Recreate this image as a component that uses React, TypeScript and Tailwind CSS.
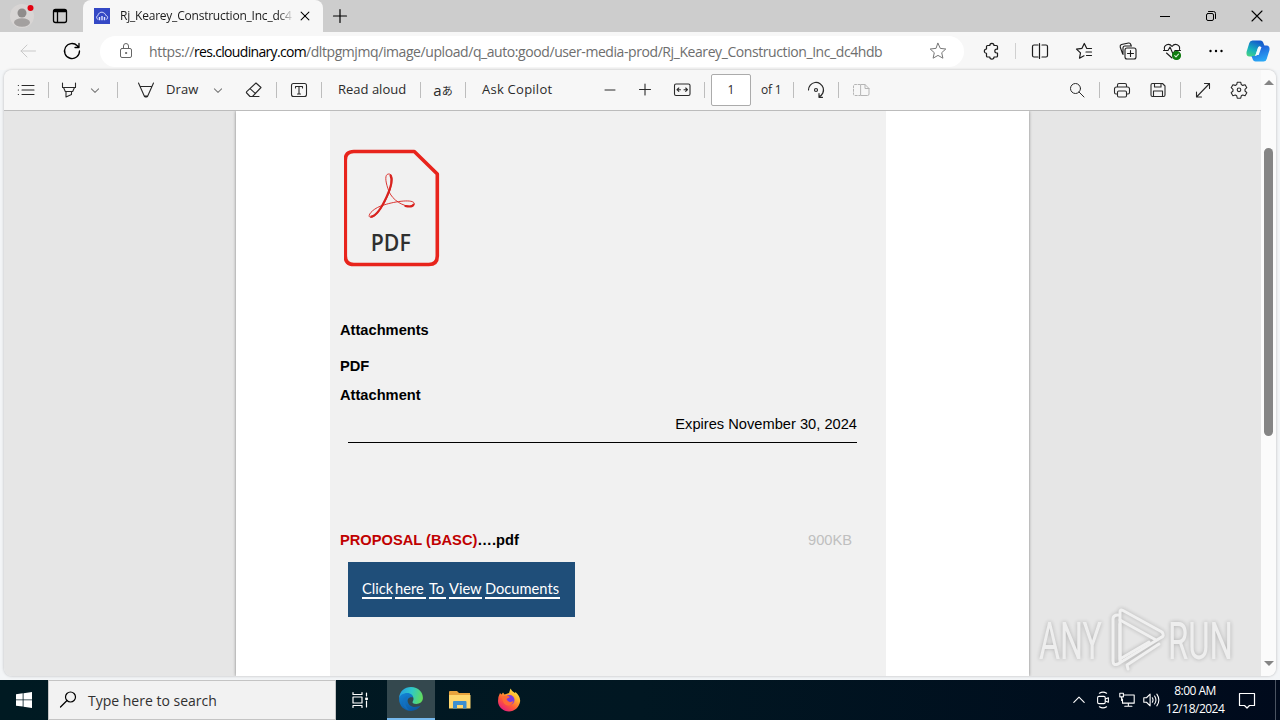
import React from 'react';
import clsx from 'clsx';

interface IconProps {
  children: React.ReactNode;
  className?: string;
  size?: string;
  strokeWidth?: number;
}

const Icon = ({ children, className, size = 'size-5', strokeWidth = 1 }: IconProps) => (
  <svg
    viewBox="0 0 20 20"
    fill="none"
    stroke="currentColor"
    strokeWidth={strokeWidth}
    strokeLinecap="round"
    strokeLinejoin="round"
    className={clsx('shrink-0', size, className)}
  >
    {children}
  </svg>
);

const Cell = ({ children, className }: { children: React.ReactNode; className?: string }) => (
  <div className={clsx('flex h-full shrink-0 items-center justify-center', className)}>{children}</div>
);

const Divider = ({ className }: { className?: string }) => (
  <div className={clsx('h-4 w-px shrink-0 bg-[#bdbdbd]', className)} />
);

const ChevronDown = () => (
  <Icon size="size-3" className="text-[#777]" strokeWidth={1.7}>
    <path d="M4 8l6 6 6-6" />
  </Icon>
);

const TabStrip = () => (
  <div className="flex h-8 bg-[#cdcdcd]">
    <Cell className="w-[38px] pl-[6px]">
      <svg viewBox="0 0 28 28" className="size-7">
        <circle cx="14" cy="14" r="12" fill="#d8d5d4" />
        <circle cx="14" cy="11" r="4.5" fill="#8f8c8b" />
        <ellipse cx="14" cy="20.5" rx="8" ry="4.2" fill="#a3a09f" />
        <circle cx="22.5" cy="6" r="3" fill="#e3000f" />
      </svg>
    </Cell>
    <Cell className="w-[45px] pr-[2px]">
      <Icon strokeWidth={1.3} className="text-black">
        <rect x="3.5" y="3.5" width="13" height="13" rx="2" />
        <path d="M4.5 5h11" strokeWidth="2.6" />
        <path d="M7.5 6v10" />
      </Icon>
    </Cell>
    <div className="flex w-60 items-center rounded-t-lg bg-[#f7f7f7] pl-[11px]">
      <svg viewBox="0 0 16 16" className="size-4 shrink-0">
        <rect width="16" height="16" fill="#3448c5" />
        <path
          d="M4.2 11.4C2.4 11 1.9 8.3 4 7.5 4.4 4.6 7.5 3.4 9.7 4.8 11 5.4 11.5 6.5 11.7 7.3 14 7.8 14.2 10.5 12.3 11.4"
          fill="none"
          stroke="#dfe4ff"
          strokeWidth="1"
        />
        <path d="M5.5 9v3.300M8 8v4.300M10.500 9v3.300" stroke="#dfe4ff" strokeWidth="1.4" />
      </svg>
      <span className="ml-[10px] w-[172px] shrink-0 overflow-hidden text-[12px] tracking-[-0.22px] whitespace-nowrap text-[#1b1b1b] [mask-image:linear-gradient(to_right,black_158px,transparent_174px)]">
        Rj_Kearey_Construction_Inc_dc4hdb
      </span>
      <Icon size="size-3" className="ml-[7px] text-black" strokeWidth={1.7}>
        <path d="M3.500 3.500l13 13M16.500 3.500l-13 13" />
      </Icon>
    </div>
    <Cell className="w-[34px]">
      <Icon className="text-black" strokeWidth={1.2}>
        <path d="M10 3.500v13M3.500 10h13" />
      </Icon>
    </Cell>
    <div className="ml-auto flex text-black">
      <Cell className="w-[46px]">
        <Icon>
          <path d="M5 10.500h10" strokeLinecap="butt" />
        </Icon>
      </Cell>
      <Cell className="w-[46px]">
        <Icon>
          <rect x="5.500" y="7.500" width="7" height="7" rx="1.500" />
          <path d="M7.500 5.500h5a2 2 0 0 1 2 2v5" />
        </Icon>
      </Cell>
      <Cell className="w-[46px]">
        <Icon strokeWidth={1.1}>
          <path d="M5 5l10 10M15 5L5 15" />
        </Icon>
      </Cell>
    </div>
  </div>
);

const CopilotLogo = () => (
  <svg viewBox="0 0 24 24" className="size-6">
    <defs>
      <linearGradient id="copilotLeft" x1="0" y1="1" x2="0.5" y2="0">
        <stop offset="0" stopColor="#4fd879" />
        <stop offset="0.45" stopColor="#18b3bd" />
        <stop offset="1" stopColor="#155dcc" />
      </linearGradient>
      <linearGradient id="copilotRight" x1="0.2" y1="0" x2="0.5" y2="1">
        <stop offset="0" stopColor="#1e57d6" />
        <stop offset="1" stopColor="#2aa8f5" />
      </linearGradient>
    </defs>
    <path d="M6.500 1.500h8q2 0 2.700 2L18.500 7h-4q-2 0-2.700 2l-2 6.500Q9 17.500 7 17.500H3.500Q0 17.500.500 13L3.300 4Q4 1.500 6.500 1.500z" fill="url(#copilotLeft)" />
    <path d="M17.500 22.500h-8q-2 0-2.700-2L5.500 17H9q2 0 2.700-2l2-6.500Q14.300 6.500 16.500 6.500h4q3.500 0 3 4.500l-2.800 9Q20 22.500 17.500 22.500z" fill="url(#copilotRight)" />
    <path d="M12.500 8h3l-2.800 8h-3.200z" fill="#f4fbff" />
  </svg>
);

const AddressBar = () => (
  <div className="flex h-[38px] items-center bg-[#f7f7f7] text-[#1b1b1b]">
    <Cell className="ml-[6px] w-11 text-[#c9c9c9]">
      <Icon>
        <path d="M17.500 10H3M9 4l-6 6 6 6" />
      </Icon>
    </Cell>
    <Cell className="w-11">
      <Icon strokeWidth={1.3} className="text-black">
        <path d="M17.500 10A7.500 7.500 0 1 1 15.300 4.700L17 6.500M17 2.500v4h-4" />
      </Icon>
    </Cell>
    <div className="ml-[6px] flex h-[31px] w-[864px] items-center rounded-full bg-white">
      <Cell className="w-[49px] pl-[3px] text-[#666]">
        <Icon>
          <rect x="4.500" y="7.500" width="11" height="9" rx="1.500" />
          <path d="M7.500 7.500V5a2.500 2.500 0 0 1 5 0v2.500" />
          <circle cx="10" cy="12" r=".6" fill="currentColor" />
        </Icon>
      </Cell>
      <div className="text-[14px] tracking-[-0.34px] whitespace-nowrap text-[#6e6e6e]">
        https://<span className="tracking-[-0.68px] text-black">res.cloudinary.com</span>
        <span className="tracking-[-0.42px]">/dltpgmjmq/image/upload/q_auto:good/user-media-prod/Rj_Kearey_Construction_Inc_dc4hdb</span>
      </div>
      <Icon className="mr-4 ml-auto text-[#777]">
        <path d="M10 2.300l2.300 5.100 5.500.6-4.100 3.700 1.200 5.500L10 14.400l-4.900 2.800 1.200-5.500L2.200 8l5.500-.6z" />
      </Icon>
    </div>
    <Cell className="ml-[12px] w-[31px]">
      <Icon strokeWidth={1.2}>
        <path d="M5.500 4.500h2.300a2 2 0 0 1 4.200 0h2.500q1 0 1 1v2.700h-.8a1.900 1.900 0 0 0 0 3.800h.8v3q0 1-1 1H12a2 2 0 0 1-4.200 0H5.500q-1 0-1-1v-2.700a2.100 2.100 0 0 1 0-4.300V5.500q0-1 1-1z" />
      </Icon>
    </Cell>
    <Divider className="ml-2 bg-[#d0d0d0]" />
    <Cell className="ml-[2px] w-11">
      <Icon strokeWidth={1.2}>
        <path d="M8 4H4q-1.500 0-1.500 1.500v9Q2.500 16 4 16h4M12 4h4q1.500 0 1.500 1.500v9q0 1.500-1.500 1.500h-4M9.500 2.500v15" />
      </Icon>
    </Cell>
    <Cell className="w-11">
      <Icon strokeWidth={1.2}>
        <path d="M17.500 7.500h-4.700L10.300 2.500 8 7.300l-5.500.8 4 3.800-1 5.300 4.500-2.400M12 11h5.500M12.500 14.500h5" />
      </Icon>
    </Cell>
    <Cell className="w-11">
      <Icon strokeWidth={1.1}>
        <rect x="7" y="7" width="11" height="11" rx="2" />
        <path d="M12.500 9.500v6M9.500 12.500h6M4.500 12.500 2.200 6Q1.800 4 3.500 3.500l7-1.500q1.700-.3 2.300 1.500l.3 1M5 13.500V7q0-2 2-2h6.500" />
      </Icon>
    </Cell>
    <Cell className="w-11">
      <Icon strokeWidth={1.1}>
        <path d="M2.500 8.500c-1-4.500 4.500-7 7.500-3 3-4 8.500-1.500 7.500 3M4.500 12l5.500 5M1.500 9.500H6l2-3.500 3 7 2-3.500h5.500" />
        <circle cx="14.500" cy="14.500" r="4" fill="#107c10" stroke="#107c10" />
        <path d="M12.700 14.600l1.300 1.300 2.500-2.700" stroke="#d5edd5" />
      </Icon>
    </Cell>
    <Cell className="w-11">
      <Icon className="text-black">
        <g fill="currentColor" stroke="none">
          <circle cx="4.500" cy="10" r="1.200" />
          <circle cx="10" cy="10" r="1.200" />
          <circle cx="15.500" cy="10" r="1.200" />
        </g>
      </Icon>
    </Cell>
    <Cell className="w-10">
      <CopilotLogo />
    </Cell>
  </div>
);

const PdfToolbar = () => (
  <div className="flex h-[41px] items-center border-b border-[#bcbcbc] bg-[#f7f7f7] text-[13px] text-[#2a2a2a]">
    <Cell className="w-11">
      <Icon strokeWidth={1.1}>
        <path d="M6 5.500h12M6 10h12M6 14.500h12M2.300 5.500h.2M2.300 10h.2M2.300 14.500h.2" />
      </Icon>
    </Cell>
    <Divider />
    <Cell className="w-10">
      <Icon strokeWidth={1.1}>
        <path d="M3.500 3v4.500h13V3M4.500 7.500l1.800 4h7.400l1.800-4M7 11.500V17l5.500-2.500v-3" />
      </Icon>
    </Cell>
    <Cell className="w-3"><ChevronDown /></Cell>
    <Divider className="ml-4" />
    <Cell className="ml-2 w-10">
      <Icon strokeWidth={1.1}>
        <path d="M2.500 3 8.500 16.500q1.500 1 3 0l6-13.500M4.500 6.500h11M8.300 16h3.400" />
      </Icon>
    </Cell>
    <span className="w-[46px] shrink-0 tracking-[0.1px]">Draw</span>
    <Cell className="w-3"><ChevronDown /></Cell>
    <Cell className="ml-[10px] w-10">
      <Icon strokeWidth={1.1}>
        <path d="M12 3l5 4.500-8.500 9H6L2.700 13q-.6-.6 0-1.300zM6 8.700l5.500 5M9 16.500h6" />
      </Icon>
    </Cell>
    <Divider className="ml-[2px]" />
    <Cell className="w-11">
      <Icon strokeWidth={1.1}>
        <rect x="2.500" y="3.500" width="15" height="13" rx="2" />
        <path d="M6.500 8V6.500h7V8M10 6.500v7.500M8.500 14h3" />
      </Icon>
    </Cell>
    <Divider />
    <span className="w-[98px] shrink-0 pl-4">Read aloud</span>
    <Divider />
    <Cell className="w-11">
      <span className="text-[15px] leading-none">a</span>
      <span className="font-['Noto_Sans_CJK_JP',sans-serif] text-[11px] leading-none">あ</span>
    </Cell>
    <Divider />
    <span className="w-[126px] shrink-0 pl-4 tracking-[0.25px]">Ask Copilot</span>
    <Cell className="w-9">
      <Icon><path d="M5 10h10" /></Icon>
    </Cell>
    <Cell className="w-[34px]">
      <Icon strokeWidth={1.1}><path d="M4.500 9.500h11M10 4v11" /></Icon>
    </Cell>
    <Cell className="w-10">
      <Icon strokeWidth={1.1}>
        <rect x="2.500" y="4" width="15.500" height="11.500" rx="1.500" />
        <path d="M5 9.700h3.500M6.800 8 5 9.700l1.800 1.700M15.500 9.700H12M13.700 8l1.800 1.700-1.800 1.700" />
      </Icon>
    </Cell>
    <Divider className="ml-[2px]" />
    <div className="ml-[6px] flex h-8 w-10 shrink-0 items-center justify-center rounded-[2px] border border-[#ababab] bg-white text-[12px]">
      1
    </div>
    <span className="w-[42px] shrink-0 pl-[10px] text-[12px] tracking-[-0.2px]">of 1</span>
    <Divider />
    <Cell className="w-11">
      <Icon strokeWidth={1.2}>
        <path d="M2.500 10A7.500 7.500 0 1 1 13 16.800M13 13.500v3.800h3.500" />
        <circle cx="10" cy="10" r="1.500" />
      </Icon>
    </Cell>
    <Divider />
    <Cell className="w-11 text-[#b5b5b5]">
      <Icon>
        <path d="M9 4.500H4q-1.500 0-1.500 1.500v8q0 1.500 1.500 1.500h5" strokeDasharray="2 1.500" />
        <path d="M10 4.500h4l4 4V14q0 1.500-1.500 1.500H10zM14 4.500v4h4" />
      </Icon>
    </Cell>

    <div className="ml-auto flex h-full items-center">
      <Cell className="w-11">
        <Icon>
          <circle cx="8.500" cy="8.500" r="5" />
          <path d="M12 12l5 5" />
        </Icon>
      </Cell>
      <Divider />
      <Cell className="ml-2 w-7">
        <Icon strokeWidth={1.1}>
          <path d="M5.500 14H4q-1.500 0-1.500-1.500V9Q2.500 7 4.500 7h11q2 0 2 2v3.500q0 1.500-1.500 1.500h-1.500M5.500 7V5Q5.500 3.500 7 3.500h6q1.500 0 1.500 1.500v2" />
          <rect x="5.500" y="11" width="9" height="6" rx="1.200" />
        </Icon>
      </Cell>
      <Cell className="w-11">
        <Icon strokeWidth={1.1}>
          <path d="M4.500 3.500h10l2.500 2.500v9q0 1.500-1.500 1.500h-11Q3 16.500 3 15V5q0-1.500 1.500-1.500z" />
          <path d="M6.500 3.500V7h6.500V3.500M5.500 16.500V11h9v5.500" />
        </Icon>
      </Cell>
      <Divider />
      <Cell className="ml-2 w-7">
        <Icon strokeWidth={1.1}>
          <path d="M3.500 17 16.500 3.500M11.500 3.500h5v5M3.500 12v5h5" />
        </Icon>
      </Cell>
      <Cell className="w-11">
        <Icon strokeWidth={1.1}>
          <path d="M8.300 2.200h3.400l.6 2.400 1.400.8 2.400-.7 1.700 3-1.800 1.700v1.600l1.800 1.700-1.700 3-2.400-.7-1.400.8-.6 2.400H8.300l-.6-2.400-1.400-.8-2.400.7-1.700-3L4 11V9.400L2.200 7.700l1.700-3 2.400.7 1.400-.8z" />
          <circle cx="10" cy="9.800" r="1.800" />
        </Icon>
      </Cell>
    </div>
  </div>
);

const PdfBadge = () => (
  <svg viewBox="0.700 0 96 118" className="h-[118px] w-24">
    <path
      d="M10.500 2.500H71L94 25v82q0 8.500-8.500 8.500h-75Q2 115.500 2 107V11q0-8.500 8.500-8.500z"
      fill="none"
      stroke="#e8241c"
      strokeWidth="3.600"
      strokeLinejoin="round"
    />
    <g fill="none" stroke="#d8231f" strokeLinecap="round">
      <path
        d="M45.500 42C42 33 41 25 45.500 25 51 25 49 36 44.500 46.500 39 59 32 68.500 27.500 68.500 22.500 67.500 29.500 59 40.500 56 53 52 70 50 71 54.500 70.500 60 57 57 49.500 48.500Q46.500 45 45.500 42z"
        strokeWidth="0.900"
      />
      <path d="M47.300 26.500C49.500 31 47.500 39 43.500 47.500 38.500 58.500 33 67 28 67.500" strokeWidth="2.200" />
      <path d="M62 57q7 1.500 8.300-1.500" strokeWidth="2" />
    </g>
    <text
      x="27.500"
      y="101.500"
      textLength="40"
      lengthAdjust="spacingAndGlyphs"
      fill="#2f2f2f"
      className="font-['Open_Sans',sans-serif] text-[24px] font-semibold"
    >
      PDF
    </text>
  </svg>
);

const linkWords = [
  { text: 'Click', width: 'w-[30px]' },
  { text: 'here', width: 'w-[31px]' },
  { text: 'To', width: 'w-[17px]' },
  { text: 'View', width: 'w-[33px]' },
  { text: 'Documents', width: 'w-[75px]' },
];

const PdfDocument = () => (
  <div className="ml-[232px] flex h-full w-[793px] justify-center bg-white pr-[49px] shadow-[0_0_3px_rgba(0,0,0,0.45)]">
    <div className="h-full w-[556px] shrink-0 bg-[#f1f1f1] pt-[38px] pl-[10px] font-['Liberation_Sans',Arial,sans-serif] text-[14.67px] leading-[18px] text-black">
      <div className="ml-1"><PdfBadge /></div>
      <p className="mt-[54px] font-bold">Attachments</p>
      <p className="mt-[18px] font-bold">PDF</p>
      <p className="mt-[11px] font-bold">Attachment</p>
      <p className="mt-[11px] w-[517px] text-right">Expires November 30, 2024</p>
      <div className="mt-[9px] ml-2 h-px w-[509px] bg-black" />
      <div className="mt-[88px] flex w-[512px] justify-between">
        <p className="font-bold"><span className="text-[#c00000]">PROPOSAL (BASC)</span>….pdf</p>
        <p className="text-[#bfbfbf]">900KB</p>
      </div>
      <div className="mt-[13px] ml-2 flex h-[55px] w-[227px] items-start justify-between bg-[#1f4e79] pt-[19px] pr-[15px] pl-[14px] font-[Lato,sans-serif] text-[14.67px] text-white">
        {linkWords.map((word) => (
          <span key={word.text} className={clsx('h-[18px] border-b-2 border-white leading-[15px] whitespace-nowrap', word.width)}>
            {word.text}
          </span>
        ))}
      </div>
    </div>
  </div>
);

const Watermark = () => (
  <svg
    viewBox="0 0 204 70"
    className="absolute top-[606px] left-[1036px] h-[70px] w-[204px] opacity-80 drop-shadow-[0_0_2px_rgba(0,0,0,0.3)]"
  >
    <g fill="#f1f1f1" className="font-[Roboto,sans-serif] text-[51px] font-normal">
      <text x="3" y="53" textLength="63" lengthAdjust="spacingAndGlyphs">ANY</text>
      <text x="132" y="53" textLength="65" lengthAdjust="spacingAndGlyphs">RUN</text>
    </g>
    <g fill="none" stroke="#f3f3f3" strokeWidth="3" strokeLinejoin="round" strokeLinecap="round">
      <path d="M84 57V6q0-3 3-1.500L126 26q3 4-1 5.500L82 58q-5 2-5-3V13q0-4 5-4" />
      <path d="M84 14l36 20M92 63l-1-4 32-21M84 18v35l29-17" />
    </g>
  </svg>
);

const Scrollbar = () => (
  <div className="flex w-[15px] flex-col items-center bg-[#fbfbfb] pt-[10px] pb-[10px]">
    <div className="border-x-[5px] border-b-[5px] border-x-transparent border-b-[#858585]" />
    <div className="mt-[63px] h-72 w-[9px] rounded-full bg-[#858585]" />
    <div className="mt-auto border-x-[5px] border-t-[5px] border-x-transparent border-t-[#858585]" />
  </div>
);

const EdgeLogo = () => (
  <svg viewBox="0 0 24 24" className="size-[26px]">
    <defs>
      <linearGradient id="edgeTop" x1="0" y1="0.3" x2="1" y2="0.5">
        <stop offset="0" stopColor="#249ee4" />
        <stop offset="0.5" stopColor="#2fc8c7" />
        <stop offset="1" stopColor="#62dc5c" />
      </linearGradient>
      <linearGradient id="edgeBody" x1="0" y1="0" x2="0.6" y2="1">
        <stop offset="0" stopColor="#1386d8" />
        <stop offset="1" stopColor="#0c59a4" />
      </linearGradient>
    </defs>
    <path d="M1 11C1.500 5 6 1 12 1c7 0 11 5 11 10 0 3.500-3 5.500-6 5.500-3 0-4-1.200-3.500-2 2-3 .5-6.500-4-6.500-4 0-7 1.500-8.500 3z" fill="url(#edgeTop)" />
    <path d="M1 12c0-3.500 4-5.500 7.500-5.500S14 9 14 10.500C10 9.500 8.500 12 9 14.500c.8 4 5.500 6.500 12 3.500-2 3.300-5.500 5-9 5C5.500 23 1 18 1 12z" fill="url(#edgeBody)" />
    <path d="M9 9.500C5.500 12 6 19 10.500 22.500 5 21 3 15.500 5 12q1.500-2.300 4-2.500z" fill="#1670c0" opacity=".7" />
  </svg>
);

const FolderLogo = () => (
  <svg viewBox="0 0 24 20" className="h-5 w-6">
    <path d="M1 2q0-1 1-1h7l2 2h11v15H1z" fill="#e8a33d" />
    <path d="M1 5h21.500v13.500H1z" fill="#ffd76e" />
    <path d="M5 18.500V12q0-1 1-1h11.500q1 0 1 1v6.500h-3.500v-3.500H9v3.500z" fill="#3c8fd0" />
  </svg>
);

const FirefoxLogo = () => (
  <svg viewBox="0 0 24 24" className="size-6">
    <defs>
      <linearGradient id="foxBody" x1="0.9" y1="0" x2="0.2" y2="1">
        <stop offset="0" stopColor="#fff44f" />
        <stop offset="0.35" stopColor="#ffb02e" />
        <stop offset="0.65" stopColor="#ff5a36" />
        <stop offset="1" stopColor="#e31587" />
      </linearGradient>
    </defs>
    <path d="M3 5l1.500 1.500L6 4.500l1.500 2L12 5l1.500-4.500Q15 4 18 5l.5-1Q24 9 23 14c-.8 5-5.500 9.500-11 9.500S1 19 1 13q0-4.500 2-8z" fill="url(#foxBody)" />
    <circle cx="12.500" cy="12" r="5" fill="#7a3be0" />
    <path d="M5 9q5-2.500 8 0l-3.500 2Q11 15.500 16.500 13q-1.500 5-6 4.500T5 9z" fill="#ff6a35" />
  </svg>
);

const Taskbar = () => (
  <div className="flex h-10 bg-linear-to-r from-[#001a22] via-[#011722] to-[#000a1c] text-white">
    <Cell className="w-12">
      <svg viewBox="0 0 16 16" className="size-4" fill="white">
        <path d="M0 2.200 6.700 1.300v6.200H0zM7.500 1.200 16 0v7.500H7.500zM0 8.300h6.700v6.300L0 13.700zM7.500 8.300H16V16l-8.500-1.200z" />
      </svg>
    </Cell>
    <div className="flex w-72 items-center border border-[#c4c4c4] bg-[#f2f2f2] pl-[9px] text-[#303030]">
      <Icon strokeWidth={1.2} className="text-black">
        <circle cx="12.500" cy="7" r="5" />
        <path d="M9 10.500 2.500 17" />
      </Icon>
      <span className="ml-[10px] text-[14px]">Type here to search</span>
    </div>
    <Cell className="w-12">
      <Icon strokeWidth={1.2}>
        <path d="M3 2.500v2h9v-2M3 17.500v-2h9v2M3 7h9v6H3zM16.500 3v3M16.500 11v6" />
        <path d="M15.800 8h1.500v1.500h-1.500z" fill="currentColor" />
      </Icon>
    </Cell>
    <Cell className="ml-[3px] w-12 border-b-2 border-[#76b9ed] bg-[#34484e]"><EdgeLogo /></Cell>
    <Cell className="w-[50px]"><FolderLogo /></Cell>
    <Cell className="w-12"><FirefoxLogo /></Cell>
    <div className="ml-auto flex">
      <Cell className="w-6">
        <Icon strokeWidth={1.4} size="size-4"><path d="M3.500 13 10 6.500l6.500 6.500" /></Icon>
      </Cell>
      <Cell className="w-6">
        <Icon strokeWidth={1.2} size="size-[18px]">
          <path d="M6 2.500q4-2.500 8 0M6 17.500q4 2.500 8 0" />
          <rect x="4" y="6" width="8.500" height="8" rx="1.500" />
          <path d="M12.500 9l3.500-1.500v5L12.500 11" />
        </Icon>
      </Cell>
      <Cell className="w-6">
        <Icon strokeWidth={1.2} size="size-[18px]">
          <path d="M7 4.500h11v9H5V9M11.500 13.500v3.500M7.500 17h8M2 2.500h4v4H2zM4 6.500v4" />
        </Icon>
      </Cell>
      <Cell className="w-6">
        <Icon strokeWidth={1.2} size="size-[18px]">
          <path d="M2 7.500h3l4-4v13l-4-4H2zM11.500 7.500q1.500 2.500 0 5M14 5.500q3 4.500 0 9M16.500 3.500q4.500 6.500 0 13" />
        </Icon>
      </Cell>
      <div className="flex w-16 flex-col items-center justify-center text-center text-[12px] leading-[18px] tracking-[-0.5px] whitespace-nowrap">
        <span>8:00 AM</span>
        <span>12/18/2024</span>
      </div>
      <Cell className="w-10">
        <Icon strokeWidth={1.2}>
          <path d="M2.500 3.500h15v12h-5L10 18l-2.500-2.500h-5z" />
        </Icon>
      </Cell>
      <div className="ml-2 w-[5px] border-l border-[#4a5361]" />
    </div>
  </div>
);

export default function App() {
  return (
    <div className="relative flex h-[720px] w-[1280px] flex-col overflow-hidden bg-[#f3f5f7] font-['Open_Sans','Noto_Sans',sans-serif]">
      <TabStrip />
      <AddressBar />
      <main className="mx-1 flex h-[606px] overflow-hidden rounded-lg shadow-[0_0_3px_rgba(0,0,0,0.25)]">
        <div className="flex w-[1257px] flex-col">
          <PdfToolbar />
          <div className="flex-1 overflow-hidden bg-[#e6e6e6]">
            <PdfDocument />
          </div>
        </div>
        <Scrollbar />
      </main>
      <div className="mt-auto"><Taskbar /></div>
      <Watermark />
    </div>
  );
}
